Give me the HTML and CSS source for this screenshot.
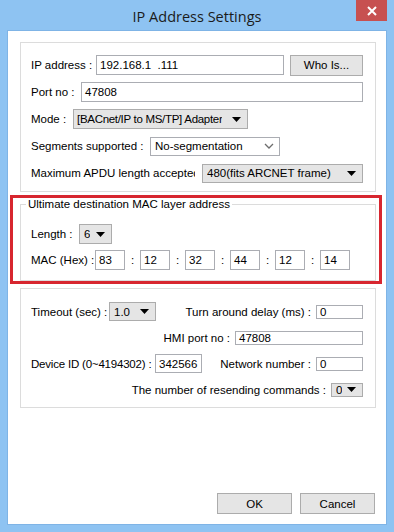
FILE: index.html
```html
<!DOCTYPE html>
<html lang="en">
<head>
    <meta charset="UTF-8">
    <title>IP Address Settings</title>
    <link rel="stylesheet" href="styles.css">
</head>
<body>

<div class="window">
    <div class="titlebar">
        <span class="title">IP Address Settings</span>
        <div class="close">
            <svg width="10" height="10" viewBox="0 0 10 10"><path d="M1 1L9 9M9 1L1 9" stroke="#fff" stroke-width="2"/></svg>
        </div>
    </div>

    <div class="client">
        <!-- connection -->
        <div class="group main-group">
            <div class="row">
                <span class="label" style="width:65px">IP address :</span>
                <div class="field ip-field">192.168.1&nbsp;&nbsp;.111</div>
                <button class="btn who-btn">Who Is...</button>
            </div>
            <div class="row">
                <span class="label" style="width:50px">Port no :</span>
                <div class="field port-field">47808</div>
            </div>
            <div class="row">
                <span class="label" style="width:42px">Mode :</span>
                <div class="combo mode-combo">
                    <span>[BACnet/IP to MS/TP] Adapter</span>
                    <svg width="9" height="5" viewBox="0 0 9 5"><path d="M0 0H9L4.5 5Z"/></svg>
                </div>
            </div>
            <div class="row">
                <span class="label" style="width:119px">Segments supported :</span>
                <div class="combo edit-combo seg-combo">
                    <span>No-segmentation</span>
                    <svg width="10" height="6" viewBox="0 0 10 6"><path d="M1 1L5 5L9 1" stroke="#6d6d6d" stroke-width="1.3" fill="none"/></svg>
                </div>
            </div>
            <div class="row">
                <span class="label clip">Maximum APDU length accepted</span>
                <div class="combo apdu-combo">
                    <span>480(fits ARCNET frame)</span>
                    <svg width="9" height="5" viewBox="0 0 9 5"><path d="M0 0H9L4.5 5Z"/></svg>
                </div>
            </div>
        </div>

        <!-- highlighted mac block -->
        <div class="highlight">
            <fieldset class="group mac-group">
                <legend>Ultimate destination MAC layer address</legend>
                <div class="row">
                    <span class="label" style="width:48px">Length :</span>
                    <div class="combo len-combo">
                        <span>6</span>
                        <svg width="9" height="5" viewBox="0 0 9 5"><path d="M0 0H9L4.5 5Z"/></svg>
                    </div>
                </div>
                <div class="row">
                    <span class="label" style="width:64px">MAC (Hex) :</span>
                    <div class="field mac-field">83</div>
                    <span class="sep">:</span>
                    <div class="field mac-field">12</div>
                    <span class="sep">:</span>
                    <div class="field mac-field">32</div>
                    <span class="sep">:</span>
                    <div class="field mac-field">44</div>
                    <span class="sep">:</span>
                    <div class="field mac-field">12</div>
                    <span class="sep">:</span>
                    <div class="field mac-field">14</div>
                </div>
            </fieldset>
        </div>

        <!-- device -->
        <div class="group dev-group">
            <div class="row short">
                <span class="label" style="width:78px">Timeout (sec) :</span>
                <div class="combo small-combo">
                    <span>1.0</span>
                    <svg width="9" height="5" viewBox="0 0 9 5"><path d="M0 0H9L4.5 5Z"/></svg>
                </div>
                <div class="right-part">
                    <span class="label">Turn around delay (ms) :</span>
                    <div class="field num-field">0</div>
                </div>
            </div>
            <div class="row short">
                <div class="right-part">
                    <span class="label">HMI port no :</span>
                    <div class="field hmi-field">47808</div>
                </div>
            </div>
            <div class="row short">
                <span class="label dev-label" style="width:124px">Device ID (0~4194302) :</span>
                <div class="field num-field">342566</div>
                <div class="right-part">
                    <span class="label">Network number :</span>
                    <div class="field num-field">0</div>
                </div>
            </div>
            <div class="row short">
                <div class="right-part">
                    <span class="label">The number of resending commands :</span>
                    <div class="combo tiny-combo">
                        <span>0</span>
                        <svg width="9" height="5" viewBox="0 0 9 5"><path d="M0 0H9L4.5 5Z"/></svg>
                    </div>
                </div>
            </div>
        </div>

        <div class="actions">
            <button class="btn">OK</button>
            <button class="btn">Cancel</button>
        </div>
    </div>
</div>

</body>
</html>
```

FILE: styles.css
```css
* {
    box-sizing: border-box;
}
body {
    margin: 0;
    font-family: "Liberation Sans", Arial, sans-serif;
    font-size: 11.5px;
    color: #000;
    background-color: #8ec3f2;
}
.window {
    width: 394px;
    height: 532px;
    background-color: #8ec3f2;
    display: flex;
    flex-direction: column;
}
.titlebar {
    height: 31px;
    display: flex;
    justify-content: center;
    align-items: center;
    position: relative;
}
.title {
    font-family: "Open Sans", sans-serif;
    font-size: 14.5px;
    color: #1b1b1b;
    margin-top: 1px;
}
.close {
    position: absolute;
    top: 0;
    right: 7px;
    width: 31px;
    height: 21px;
    background-color: #c75050;
    display: flex;
    justify-content: center;
    align-items: center;
}
.client {
    flex: 1;
    margin: 0 8px 8px;
    background-color: #fff;
    box-shadow: 0 0 0 1px #7fb4e6;
    display: flex;
    flex-direction: column;
}

/* group boxes */
.group {
    border: 1px solid #dcdcdc;
    margin: 0;
    display: flex;
    flex-direction: column;
    gap: 7px;
}
.main-group {
    margin: 11px 0 0 12px;
    width: 356px;
    padding: 12px 12px 8px 10px;
}
.highlight {
    margin: 3px 0 0 2px;
    width: 372px;
    border: 3px solid #d7262f;
    padding: 0 3px 0 7px;
}
.mac-group {
    min-width: 0;
    width: 356px;
    padding: 14px 12px 10px 10px;
    gap: 6px;
}
.mac-group legend {
    padding: 0 2px;
    margin-left: -5px;
    line-height: 12px;
}
.dev-group {
    margin: 4px 0 0 12px;
    width: 356px;
    padding: 13px 12px 8px 10px;
}

.row {
    display: flex;
    align-items: center;
    height: 20px;
}
.row.short {
    height: 19px;
}
.label {
    white-space: nowrap;
    flex-shrink: 0;
}
.dev-label {
    letter-spacing: -0.2px;
}
.clip {
    width: 164px;
    overflow: hidden;
    margin-right: 7px;
}
.right-part {
    margin-left: auto;
    display: flex;
    align-items: center;
    gap: 5px;
}

/* inputs */
.field {
    height: 100%;
    border: 1px solid #abadb3;
    background: #fff;
    padding: 0 3px;
    display: flex;
    align-items: center;
    white-space: nowrap;
}
.ip-field { width: 188px; }
.port-field { width: 283px; }
.mac-field { width: 30px; }
.num-field { width: 47px; }
.hmi-field { width: 128px; }
.sep {
    width: 15px;
    text-align: center;
}

/* drop lists */
.combo {
    height: 100%;
    border: 1px solid #acacac;
    background-color: #e5e5e5;
    display: flex;
    align-items: center;
    justify-content: space-between;
    gap: 4px;
    padding: 0 6px 0 4px;
    white-space: nowrap;
}
.combo span {
    overflow: hidden;
}
.combo svg {
    flex-shrink: 0;
}
.edit-combo {
    background-color: #fff;
    border-color: #abadb3;
    padding-right: 5px;
}
.mode-combo {
    width: 175px;
    gap: 3px;
    padding-left: 3px;
}
.mode-combo span {
    letter-spacing: -0.3px;
}
.seg-combo { width: 130px; height: 19px; }
.apdu-combo { width: 161px; height: 19px; }
.len-combo { width: 33px; }
.small-combo { width: 47px; }
.tiny-combo { width: 32px; }

.btn {
    font-family: "Liberation Sans", Arial, sans-serif;
    font-size: 11.5px;
    color: #000;
    background-color: #e5e5e5;
    border: 1px solid #acacac;
    height: 21px;
    width: 75px;
    padding: 0;
}
.who-btn {
    width: 73px;
    margin-left: auto;
    height: 21px;
}
.actions {
    margin-top: auto;
    display: flex;
    justify-content: flex-end;
    gap: 8px;
    padding: 0 11px 10px 0;
}
```
